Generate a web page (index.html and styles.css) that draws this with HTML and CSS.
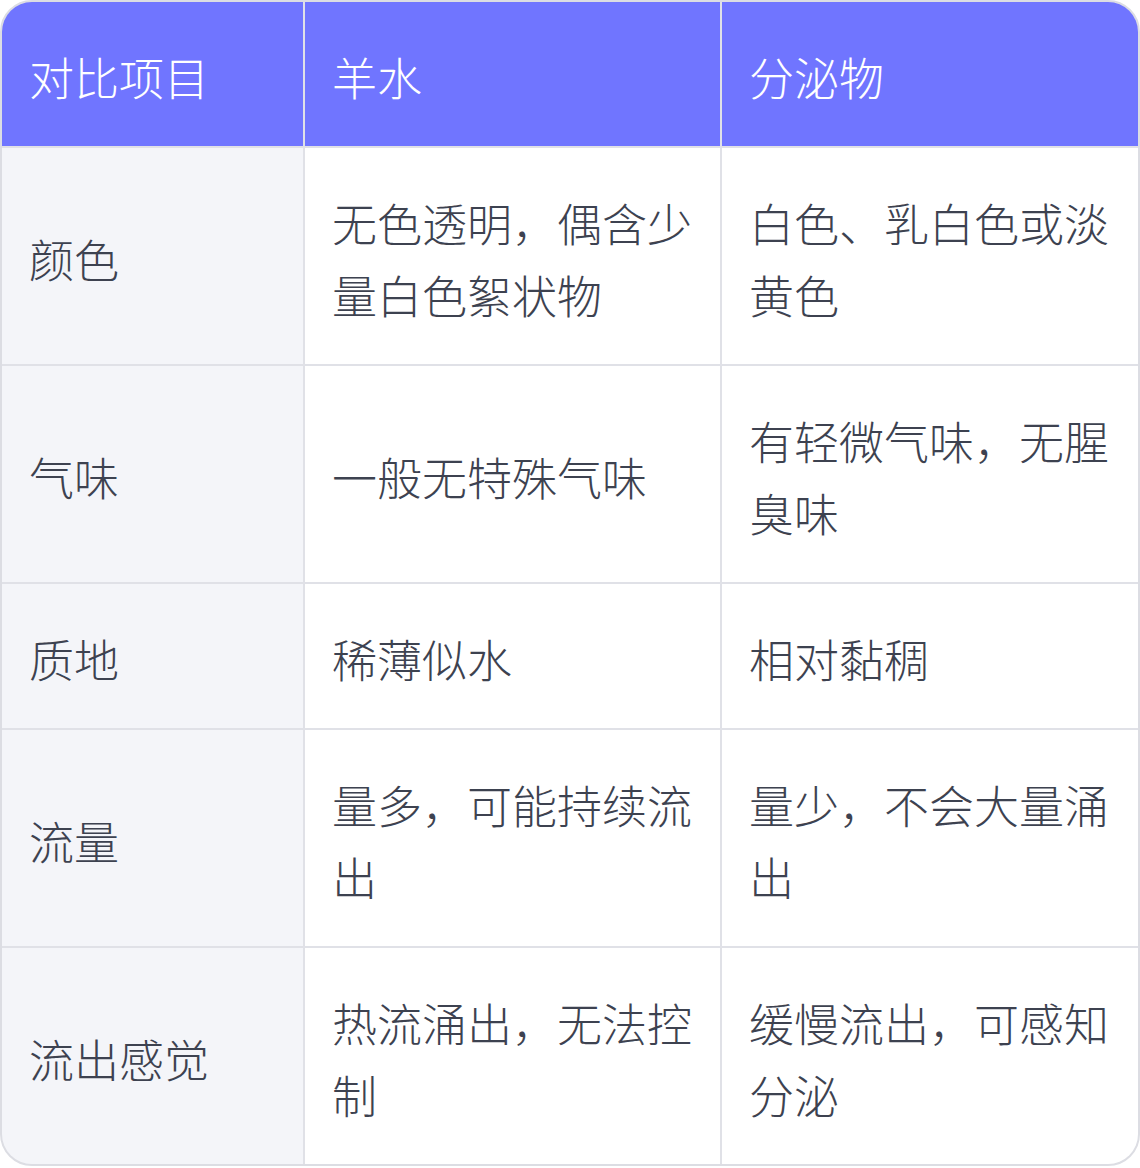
FILE: index.html
```html
<!DOCTYPE html>
<html lang="zh-CN">
<head>
<meta charset="utf-8">
<link rel="stylesheet" href="styles.css">
</head>
<body>
<div class="table">
  <div class="cell head">对比项目</div>
  <div class="cell head">羊水</div>
  <div class="cell head">分泌物</div>

  <div class="cell label">颜色</div>
  <div class="cell">无色透明，偶含少量白色絮状物</div>
  <div class="cell">白色、乳白色或淡黄色</div>

  <div class="cell label">气味</div>
  <div class="cell">一般无特殊气味</div>
  <div class="cell">有轻微气味，无腥臭味</div>

  <div class="cell label">质地</div>
  <div class="cell">稀薄似水</div>
  <div class="cell">相对黏稠</div>

  <div class="cell label">流量</div>
  <div class="cell">量多，可能持续流出</div>
  <div class="cell">量少，不会大量涌出</div>

  <div class="cell label">流出感觉</div>
  <div class="cell">热流涌出，无法控制</div>
  <div class="cell">缓慢流出，可感知分泌</div>
</div>
</body>
</html>
```

FILE: styles.css
```css
html, body {
  margin: 0;
  padding: 0;
  background: #ffffff;
}
.table {
  width: 1140px;
  box-sizing: border-box;
  display: grid;
  grid-template-columns: 301px 415px 416px;
  gap: 2px;
  background: #e0e1e7;
  border: 2px solid #dcdde3;
  border-radius: 32px;
  overflow: hidden;
  font-family: "Noto Sans CJK SC", "Noto Sans", sans-serif;
  font-weight: 300;
  font-size: 45px;
  line-height: 72px;
  color: #3d4250;
}
.cell {
  background: #ffffff;
  padding: 39px 27px 33px;
  display: flex;
  align-items: center;
  min-height: 72px;
}
.cell.head {
  background: #7075ff;
  color: #ffffff;
}
.cell.label {
  background: #f4f5f9;
}
```
